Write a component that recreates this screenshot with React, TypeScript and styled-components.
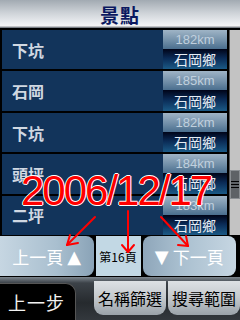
import styled, { createGlobalStyle } from "styled-components";

const GlobalStyle = createGlobalStyle`
  html, body {
    margin: 0;
    padding: 0;
    background: #000;
  }
  * {
    box-sizing: border-box;
  }
`;

const cjk = `"Noto Sans CJK TC", "Noto Sans CJK SC", "Liberation Sans", sans-serif`;

const Screen = styled.div`
  position: relative;
  width: 240px;
  height: 320px;
  overflow: hidden;
  background: #000;
  display: flex;
  flex-direction: column;
  font-family: ${cjk};
`;

const Header = styled.div`
  height: 28px;
  flex: none;
  display: flex;
  align-items: center;
  justify-content: center;
  background: linear-gradient(#a2aab2 0%, #cdd2d7 45%, #eef0f2 85%, #f4f4f4 92%, #5a6068 100%);
  color: #0a1860;
  font-size: 19px;
  font-weight: bold;
  letter-spacing: 1px;
`;

const ListArea = styled.div`
  height: 207px;
  flex: none;
  display: flex;
  padding-top: 2px;
`;

const Rows = styled.div`
  flex: 1;
  display: flex;
  flex-direction: column;
  gap: 2px;
  padding-left: 2px;
  padding-right: 2px;
`;

const Row = styled.div`
  flex: 1;
  display: flex;
`;

const Name = styled.div`
  flex: 1;
  background: #12345b;
  color: #d0d8e2;
  font-size: 16px;
  font-weight: bold;
  display: flex;
  align-items: center;
  padding-left: 10px;
`;

const Info = styled.div`
  width: 64px;
  display: flex;
  flex-direction: column;
`;

const Dist = styled.div`
  height: 48%;
  display: flex;
  align-items: center;
  justify-content: center;
  background: linear-gradient(#9fb4c6, #6e8ca6 60%, #4a6e8e);
  color: #c0d0de;
  font-family: "Liberation Sans", sans-serif;
  font-size: 13px;
`;

const Town = styled.div`
  flex: 1;
  display: flex;
  align-items: center;
  justify-content: center;
  background: linear-gradient(#000418, #0a2a55 45%, #1b5a86);
  color: #e6edf4;
  font-size: 14px;
`;

const Scrollbar = styled.div`
  position: relative;
  width: 11px;
  flex: none;
  background: #c3c3c3;
  border-left: 1px solid #5a5a5a;
`;

const Thumb = styled.div`
  position: absolute;
  left: 0;
  right: 0;
  top: 140px;
  height: 29px;
  background: #5e6266;
  border: 1px solid #8a8e92;
  display: flex;
  flex-direction: column;
  justify-content: center;
  align-items: center;
  gap: 2px;
`;

const Grip = styled.div`
  width: 8px;
  height: 1px;
  background: #000;
`;

const Pager = styled.div`
  height: 42px;
  flex: none;
  display: flex;
  gap: 2px;
  padding: 1px 4px 1px 0;
  background: #000;
`;

const PageButton = styled.div<{ $side: "left" | "right" }>`
  flex: 1;
  display: flex;
  align-items: center;
  justify-content: center;
  gap: 4px;
  color: #fff;
  font-size: 17px;
  border-radius: ${(p) => (p.$side === "left" ? "0 8px 8px 0" : "8px")};
  background: ${(p) =>
    p.$side === "left"
      ? "linear-gradient(90deg, #c6d6e2, #a9bfcf 60%, #8aa3b7)"
      : "linear-gradient(90deg, #8ea6ba, #a9bfcf 40%, #c6d6e2)"};
`;

const Arrow = styled.span`
  font-size: 18px;
  font-family: "DejaVu Sans", sans-serif;
`;

const PageLabel = styled.div`
  width: 45px;
  flex: none;
  display: flex;
  align-items: center;
  justify-content: center;
  background: #c2d8e4;
  color: #000;
  font-size: 12px;
`;

const BottomBar = styled.div`
  flex: 1;
  display: flex;
  align-items: stretch;
  background: linear-gradient(#7d868e 0%, #3c4248 14%, #262a2e 60%, #33383d 100%);
  padding-top: 4px;
`;

const BackTab = styled.div`
  width: 76px;
  margin-top: 2px;
  display: flex;
  align-items: center;
  padding-left: 8px;
  background: #000;
  border-top: 1px solid #555;
  border-right: 1px solid #555;
  border-radius: 0 10px 0 0;
  color: #f2f2f2;
  font-size: 18px;
  letter-spacing: 1px;
`;

const Tabs = styled.div`
  flex: 1;
  display: flex;
  justify-content: flex-end;
  gap: 2px;
  padding-bottom: 5px;
`;

const Tab = styled.div`
  width: 72px;
  display: flex;
  align-items: center;
  justify-content: center;
  background: linear-gradient(#dde1e4, #c3c8cc 50%, #9aa2a9);
  border-radius: 0 0 9px 9px;
  color: #000;
  font-size: 16px;
`;

const Stamp = styled.div`
  position: absolute;
  left: 21px;
  top: 170px;
  font-family: "Liberation Sans", sans-serif;
  font-size: 42px;
  line-height: 1;
  letter-spacing: -2px;
  color: #ff0000;
  text-shadow: 1px 0 #fff, -1px 0 #fff, 0 1px #fff, 0 -1px #fff;
  pointer-events: none;
`;

const Marks = styled.svg`
  position: absolute;
  left: 0;
  top: 0;
  pointer-events: none;
`;

const places = [
  { name: "下坑", dist: "182km" },
  { name: "石岡", dist: "185km" },
  { name: "下坑", dist: "182km" },
  { name: "頭坪", dist: "184km" },
  { name: "二坪", dist: "183km" },
];

export default function App() {
  return (
    <>
      <GlobalStyle />
      <Screen>
        <Header>景點</Header>
        <ListArea>
          <Rows>
            {places.map((p, i) => (
              <Row key={i}>
                <Name>{p.name}</Name>
                <Info>
                  <Dist>{p.dist}</Dist>
                  <Town>石岡鄉</Town>
                </Info>
              </Row>
            ))}
          </Rows>
          <Scrollbar>
            <Thumb>
              <Grip />
              <Grip />
              <Grip />
            </Thumb>
          </Scrollbar>
        </ListArea>
        <Pager>
          <PageButton $side="left">
            上一頁<Arrow>▲</Arrow>
          </PageButton>
          <PageLabel>第16頁</PageLabel>
          <PageButton $side="right">
            <Arrow>▼</Arrow>下一頁
          </PageButton>
        </Pager>
        <BottomBar>
          <BackTab>上一步</BackTab>
          <Tabs>
            <Tab>名稱篩選</Tab>
            <Tab>搜尋範圍</Tab>
          </Tabs>
        </BottomBar>
        <Stamp>2006/12/17</Stamp>
        <Marks width="240" height="320" viewBox="0 0 240 320">
          <g stroke="#ff0000" strokeWidth="2" fill="none" strokeLinecap="round">
            <line x1="95" y1="217" x2="67" y2="245" />
            <line x1="67" y1="245" x2="70" y2="235" />
            <line x1="67" y1="245" x2="78" y2="243" />
            <line x1="128" y1="211" x2="128" y2="252" />
            <line x1="128" y1="252" x2="122" y2="245" />
            <line x1="128" y1="252" x2="134" y2="245" />
            <line x1="161" y1="217" x2="188" y2="246" />
            <line x1="188" y1="246" x2="186" y2="236" />
            <line x1="188" y1="246" x2="178" y2="245" />
          </g>
        </Marks>
      </Screen>
    </>
  );
}
